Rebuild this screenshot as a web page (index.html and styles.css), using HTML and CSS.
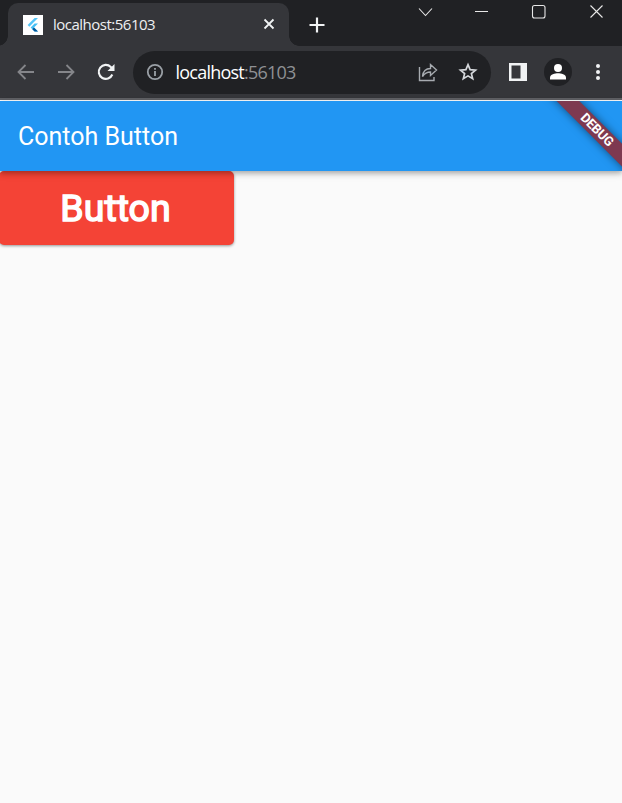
FILE: index.html
```html
<!DOCTYPE html>
<html lang="id">
<head>
<meta charset="utf-8">
<title>localhost:56103</title>
<link rel="stylesheet" href="styles.css">
</head>
<body>
<header class="tabstrip">
  <div class="tab">
    <svg class="favicon" viewBox="0 0 20 20"><path fill="#fff" d="M0 0h20v20H0z"/><path fill="#54c5f8" d="M11.6 3H15l-8.700 8.700L4.600 10z"/><path fill="#45bff5" d="M11.600 8.600H15l-4 4 4 4h-3.400l-4-4z"/><path fill="#01579b" d="M9.300 14.300l1.700-1.700 4 4h-3.400z"/></svg>
    <span class="tab-title">localhost:56103</span>
    <svg class="tab-close" viewBox="0 0 12 12"><path d="M1.500 1.500l9 9M10.500 1.500l-9 9"/></svg>
  </div>
  <svg class="new-tab" viewBox="0 0 16 16"><path d="M8 .5v15M.5 8h15"/></svg>
  <svg class="win-controls" viewBox="0 0 190 24"><path d="M6 8.500l6.500 7 6.500-7M62 11.500h13M177.500 5.500l12 12M189.500 5.500l-12 12"/><rect x="119.500" y="5.500" width="12.500" height="12.500" rx="2"/></svg>
</header>
<nav class="toolbar">
  <svg class="nav-icon dim" viewBox="0 0 20 20"><path d="M18 10H3M9.500 3L2.500 10l7 7"/></svg>
  <svg class="nav-icon dim" viewBox="0 0 20 20"><path d="M2 10h15M10.500 3l7 7-7 7"/></svg>
  <svg class="nav-icon" viewBox="0 0 20 20"><path d="M16.300 12.500A7 7 0 1 1 14.800 5l2 2"/><path class="solid" d="M18.500 2v7h-7z"/></svg>
  <div class="address">
    <svg class="info" viewBox="0 0 18 18"><circle cx="9" cy="9" r="7.200"/><path d="M9 8v5M9 5v1.800"/></svg>
    <span class="url">localhost<span class="port">:56103</span></span>
    <svg class="share" viewBox="0 0 20 20"><path d="M1.500 5v13.500H16V15M4.500 14.500c.5-5 3.500-8 8-8V2.500L18.500 8l-6 5.500V10c-3.500 0-6 1.500-8 4.500z"/></svg>
    <svg class="star" viewBox="0 0 20 20"><path d="M10 2.700l2.100 5 5.400.4-4.100 3.500 1.300 5.200-4.700-2.900-4.700 2.900 1.300-5.200L2.500 8.100l5.400-.4z"/></svg>
  </div>
  <svg class="panel" viewBox="0 0 18 18"><path fill="#f1f3f4" fill-rule="evenodd" d="M0 0h18v18H0zM2.500 2.500v13h9v-13z"/></svg>
  <svg class="avatar" viewBox="0 0 28 28"><circle cx="14" cy="14" r="14" fill="#202124"/><circle cx="14" cy="10" r="4" fill="#fff"/><path fill="#fff" d="M6 21.500v-2c0-3 5-4.300 8-4.300s8 1.300 8 4.300v2z"/></svg>
  <svg class="menu" viewBox="0 0 4 16"><circle cx="2" cy="2" r="2"/><circle cx="2" cy="8" r="2"/><circle cx="2" cy="14" r="2"/></svg>
</nav>
<main class="page">
  <div class="appbar">
    <h1>Contoh Button</h1>
    <div class="banner-clip"><div class="banner">DEBUG</div></div>
  </div>
  <button class="raised">Button</button>
</main>
</body>
</html>
```
FILE: styles.css
```css
* { box-sizing: border-box; }
body { margin: 0; height: 803px; overflow: hidden; display: flex; flex-direction: column; background: #fafafa; font-family: Roboto, sans-serif; }
svg { display: block; flex: none; fill: none; }
.tabstrip { height: 46px; flex: none; display: flex; align-items: flex-start; padding: 3px 0 0 8px; background: #202124; }
.tab { position: relative; width: 281px; height: 43px; flex: none; display: flex; align-items: center; padding: 0 14px 1px 15px; background: #35363a; border-radius: 10px 10px 0 0; }
.tab::before, .tab::after { content: ""; position: absolute; bottom: 0; width: 10px; height: 10px; }
.tab::before { left: -10px; background: radial-gradient(circle at 0 0, transparent 9.500px, #35363a 10px); }
.tab::after { right: -10px; background: radial-gradient(circle at 100% 0, transparent 9.500px, #35363a 10px); }
.favicon { width: 20px; height: 20px; margin-top: 2px; }
.tab-title { margin-left: 10px; font: 15px/20px "Open Sans", sans-serif; letter-spacing: -.5px; color: #eeeff1; white-space: nowrap; }
.tab-close { width: 12px; height: 12px; margin-left: auto; stroke: #f1f3f4; stroke-width: 1.800; }
.new-tab { width: 16px; height: 16px; margin: 13.500px 0 0 19.500px; stroke: #f1f3f4; stroke-width: 2.200; }
.win-controls { width: 190px; height: 24px; margin: -3px 19px 0 88.500px; stroke: #e8e8e8; stroke-width: 1.100; }
.toolbar { height: 55px; flex: none; display: flex; align-items: center; padding: 0 0 2px 15.500px; background: #35363a; border-bottom: 1px solid #fff; box-shadow: inset 0 -2px #5f6064; }
.nav-icon { width: 20px; height: 20px; margin-right: 20px; stroke: #f1f3f4; stroke-width: 2.100; }
.nav-icon.dim { stroke: #85868a; stroke-width: 1.800; }
.solid { fill: #f1f3f4; stroke: none; }
.address { width: 358px; height: 43px; margin-left: -2.500px; display: flex; align-items: center; padding: 0 13px; background: #202124; border-radius: 22px; }
.info { width: 18px; height: 18px; stroke: #9aa0a6; stroke-width: 1.800; }
.url { margin-left: 11.500px; font: 18px/24px "Open Sans", sans-serif; letter-spacing: -.77px; color: #fff; white-space: nowrap; }
.port { color: #8f9194; }
.share { width: 20px; height: 20px; margin-left: auto; stroke: #a7abb0; stroke-width: 1.400; }
.star { width: 20px; height: 20px; margin-left: 20px; stroke: #d5d8dc; stroke-width: 1.700; }
.panel { width: 18px; height: 18px; margin-left: 18px; }
.avatar { width: 28px; height: 28px; margin-left: 17px; }
.menu { width: 4px; height: 16px; margin-left: 24px; fill: #f1f3f4; }
.page { flex: 1; }
.appbar { position: relative; z-index: 1; height: 70px; display: flex; align-items: center; padding: 2px 0 0 18px; background: #2196f3; box-shadow: 0 2px 5px rgba(0,0,0,.25), 0 3px 8px rgba(0,0,0,.12); }
.appbar h1 { margin: 0; font-size: 25px; font-weight: 400; line-height: 32px; color: #fff; white-space: nowrap; }
.banner-clip { position: absolute; top: 0; right: 0; width: 90px; height: 70px; overflow: hidden; }
.banner { position: absolute; left: 4.500px; top: 20.500px; width: 120px; height: 15.600px; transform: rotate(45deg); background: #7e3950; box-shadow: 0 0 8px rgba(0,0,0,.5); color: #fff; font-size: 13px; font-weight: 700; line-height: 16px; text-align: center; letter-spacing: -.2px; }
.raised { display: block; width: 235px; height: 73.500px; margin: 0 0 0 -1px; padding: 0 2px 0 0; border: 0; border-radius: 5px; background: #f44336; box-shadow: 0 1px 3px rgba(0,0,0,.4); color: #fff; font: 400 37.500px/72px Roboto, sans-serif; -webkit-text-stroke: 1.500px #fff; }
```
